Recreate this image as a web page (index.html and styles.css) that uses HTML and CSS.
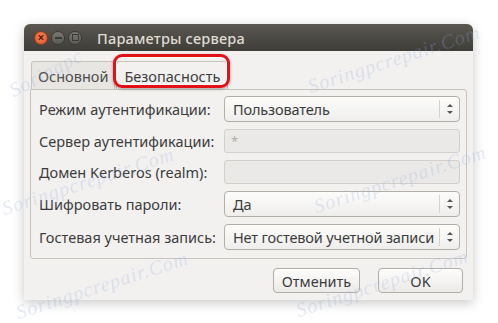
FILE: index.html
```html
<!DOCTYPE html>
<html lang="ru">
<head>
    <meta charset="UTF-8">
    <title>Параметры сервера</title>
    <link rel="stylesheet" href="styles.css">
</head>
<body>
    <div class="window">
        <div class="titlebar">
            <span class="wbtn close">&times;</span>
            <span class="wbtn minimize"></span>
            <span class="wbtn maximize"></span>
            <span class="title">Параметры сервера</span>
        </div>
        <div class="content">
            <div class="tabs">
                <div class="tab">Основной</div>
                <div class="tab active">Безопасность<span class="highlight"></span></div>
            </div>
            <div class="page">
                <div class="label">Режим аутентификации:</div>
                <div class="combo"><span class="value">Пользователь</span><span class="spin"></span></div>

                <div class="label">Сервер аутентификации:</div>
                <div class="entry disabled">*</div>

                <div class="label">Домен Kerberos (realm):</div>
                <div class="entry disabled"></div>

                <div class="label">Шифровать пароли:</div>
                <div class="combo"><span class="value">Да</span><span class="spin"></span></div>

                <div class="label">Гостевая учетная запись:</div>
                <div class="combo"><span class="value">Нет гостевой учетной записи</span><span class="spin"></span></div>
            </div>
            <div class="buttons">
                <button class="btn cancel">Отменить</button>
                <button class="btn ok">OK</button>
            </div>
        </div>
    </div>

    <!-- site watermark over the screenshot -->
    <div class="watermark w1">Soringpc</div>
    <div class="watermark w2">Soringpcrepair.Com</div>
    <div class="watermark w3">Soringpcrepair.Com</div>
    <div class="watermark w4">Soringpcrepair.Com</div>
    <div class="watermark w5">Soringpcrepair.Com</div>
    <div class="watermark w6">Soringpcrepair.Com</div>
</body>
</html>
```

FILE: styles.css
```css
body {
    margin: 0;
    background: #fff;
    font-family: "Noto Sans", "DejaVu Sans", sans-serif;
    color: #3c3c3c;
    position: relative;
    height: 323px;
    overflow: hidden;
}

.window {
    width: 449px;
    margin: 24px 0 0 24px;
    background: #f2f1f0;
    border-radius: 6px 6px 0 0;
    box-shadow: 0 3px 12px rgba(0, 0, 0, 0.22);
}

.titlebar {
    height: 27px;
    display: flex;
    align-items: center;
    padding-left: 10px;
    background: linear-gradient(#5a5750, #3e3d39);
    border-radius: 6px 6px 0 0;
}

.wbtn {
    width: 14px;
    height: 14px;
    border-radius: 50%;
    margin-right: 3px;
    box-sizing: border-box;
    display: flex;
    align-items: center;
    justify-content: center;
    background: linear-gradient(#7a7873, #5c5a55);
    border: 1px solid #3a3935;
    color: #3a3935;
    font-size: 12px;
    line-height: 1;
}

.wbtn.close {
    background: radial-gradient(circle at 50% 40%, #f58357, #e2512a);
    border-color: #8a3a1e;
    color: #5a2010;
    font-weight: bold;
}

.wbtn.minimize::after {
    content: "";
    width: 7px;
    height: 2px;
    background: #3a3935;
}

.wbtn.maximize::after {
    content: "";
    width: 5px;
    height: 5px;
    border: 1px solid #3a3935;
}

.title {
    margin-left: 12px;
    color: #dfdbd2;
    font-size: 14.5px;
    font-weight: 500;
    letter-spacing: 0.2px;
}

.content {
    padding: 10px 6px 7px 6px;
}

.tabs {
    display: flex;
    height: 28px;
    padding-left: 1px;
}

.tab {
    position: relative;
    padding: 0 6px;
    font-size: 14.5px;
    line-height: 28px;
    color: #4c4c4c;
    background: #e8e6e3;
    border: 1px solid #c8c4bd;
    border-bottom: none;
    border-radius: 3px 3px 0 0;
}

.tab.active {
    background: #f2f1f0;
    margin-left: 1px;
    padding: 0 7px;
    color: #3c3c3c;
}

.highlight {
    position: absolute;
    top: -8px;
    left: -4px;
    right: -3px;
    bottom: 1px;
    border: 3px solid #e41018;
    border-radius: 9px;
    box-shadow: 0 1px 3px rgba(0, 0, 0, 0.35), inset 0 0 0 1px #fff;
}

.page {
    display: grid;
    grid-template-columns: 185px 236px;
    row-gap: 7px;
    align-items: center;
    padding: 6px 8px 8px 8px;
    border: 1px solid #c8c4bd;
    border-radius: 0 3px 3px 3px;
    background: #f2f1f0;
}

.label {
    font-size: 14.5px;
}

.combo {
    height: 26px;
    box-sizing: border-box;
    display: flex;
    align-items: center;
    border: 1px solid #b3afa8;
    border-radius: 4px;
    background: linear-gradient(#fcfcfb, #efeeec);
    font-size: 14.5px;
}

.combo .value {
    flex: 1;
    padding-left: 8px;
    letter-spacing: -0.15px;
    white-space: nowrap;
    overflow: hidden;
}

.combo .spin {
    width: 19px;
    height: 18px;
    border-left: 1px solid #d5d2cd;
    position: relative;
    flex-shrink: 0;
}

.combo .spin::before,
.combo .spin::after {
    content: "";
    position: absolute;
    left: 7px;
    border-left: 3px solid transparent;
    border-right: 3px solid transparent;
}

.combo .spin::before {
    top: 4px;
    border-bottom: 3px solid #555;
}

.combo .spin::after {
    top: 11px;
    border-top: 3px solid #555;
}

.entry {
    height: 24px;
    box-sizing: border-box;
    border: 1px solid #d3d0cb;
    border-radius: 3px;
    padding: 2px 6px;
    font-size: 13px;
    color: #b0aeaa;
}

.entry.disabled {
    background: #eae9e7;
}

.buttons {
    display: flex;
    justify-content: flex-end;
    gap: 18px;
    padding: 9px 4px 0 0;
}

.btn {
    height: 25px;
    font-family: inherit;
    font-size: 14.5px;
    color: #3c3c3c;
    border: 1px solid #b3afa8;
    border-radius: 4px;
    background: linear-gradient(#fdfdfc, #eceae8);
    padding: 0;
}

.btn.cancel {
    width: 87px;
}

.btn.ok {
    width: 85px;
}

.watermark {
    position: absolute;
    font-family: "Liberation Serif", serif;
    font-style: italic;
    font-size: 20px;
    letter-spacing: 1px;
    color: rgba(150, 170, 215, 0.26);
    transform: rotate(-18deg);
    transform-origin: left bottom;
    white-space: nowrap;
    line-height: 24px;
}

.w1 { left: 16px; top: 78px; transform: rotate(-28deg); }
.w2 { left: 312px; top: 74px; }
.w3 { left: 6px; top: 196px; }
.w4 { left: 318px; top: 194px; }
.w5 { left: 20px; top: 300px; }
.w6 { left: 300px; top: 298px; }
```
